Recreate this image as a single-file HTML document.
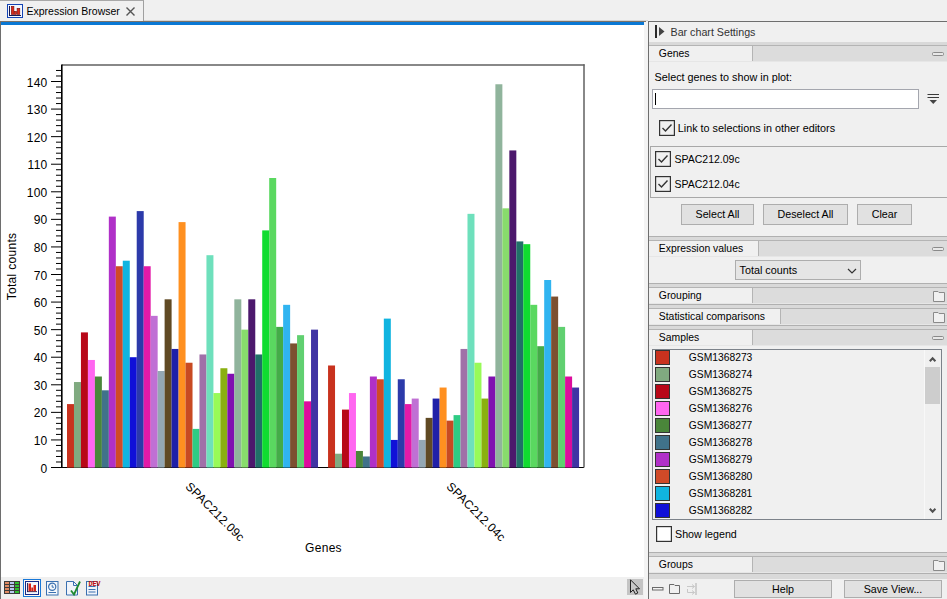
<!DOCTYPE html>
<html><head><meta charset="utf-8">
<style>
*{box-sizing:border-box;margin:0;padding:0}
html,body{width:947px;height:599px;overflow:hidden;background:#f0f0f0;font-family:"Liberation Sans",sans-serif;color:#000}
.abs{position:absolute}
svg text.ct{font-family:"Liberation Sans",sans-serif;font-size:12px;fill:#000;letter-spacing:0.3px}
.t{position:absolute;font-size:10.7px;white-space:nowrap;line-height:1;color:#000}
.hdr{position:absolute;left:649px;width:298px;height:15px;background:#dcdcdc}
.hdr .tab{position:absolute;left:0;top:0;height:15px;background:#f0f0f0;border-right:1px solid #b4b4b4}
.hdr .tab span{position:absolute;left:9px;top:2px;font-size:10.7px;white-space:nowrap;line-height:1}
.btn{position:absolute;background:#e1e1e1;border:1px solid #adadad;font-size:10.7px;text-align:center;white-space:nowrap}
</style></head><body>
<svg class="abs" style="left:0;top:0" width="947" height="599" viewBox="0 0 947 599">
<rect x="1" y="25" width="643" height="552" fill="#fff"/>
<rect x="51" y="467" width="533" height="1" fill="#000"/>
<rect x="67.00" y="404.09" width="6.99" height="63.51" fill="#c8321e"/>
<rect x="73.97" y="382.03" width="6.99" height="85.57" fill="#80aa80"/>
<rect x="80.94" y="332.40" width="6.99" height="135.20" fill="#b80818"/>
<rect x="87.92" y="359.97" width="6.99" height="107.63" fill="#ff66f0"/>
<rect x="94.89" y="376.51" width="6.99" height="91.09" fill="#4a863a"/>
<rect x="101.86" y="390.30" width="6.99" height="77.30" fill="#40728a"/>
<rect x="108.83" y="216.60" width="6.99" height="251.00" fill="#b030c8"/>
<rect x="115.81" y="266.23" width="6.99" height="201.37" fill="#d04a28"/>
<rect x="122.78" y="260.71" width="6.99" height="206.89" fill="#10b4e0"/>
<rect x="129.75" y="357.21" width="6.99" height="110.39" fill="#1010d8"/>
<rect x="136.72" y="211.09" width="6.99" height="256.51" fill="#2c3aaa"/>
<rect x="143.69" y="266.23" width="6.99" height="201.37" fill="#e41aa8"/>
<rect x="150.67" y="315.86" width="6.99" height="151.74" fill="#c070d4"/>
<rect x="157.64" y="371.00" width="6.99" height="96.60" fill="#94a8b4"/>
<rect x="164.61" y="299.31" width="6.99" height="168.29" fill="#604a24"/>
<rect x="171.58" y="348.94" width="6.99" height="118.66" fill="#2020a8"/>
<rect x="178.56" y="222.11" width="6.99" height="245.49" fill="#ff9020"/>
<rect x="185.53" y="362.73" width="6.99" height="104.87" fill="#c84a22"/>
<rect x="192.50" y="428.90" width="6.99" height="38.70" fill="#2ecc84"/>
<rect x="199.47" y="354.46" width="6.99" height="113.14" fill="#a070a8"/>
<rect x="206.44" y="255.20" width="6.99" height="212.40" fill="#6ee0bc"/>
<rect x="213.42" y="393.06" width="6.99" height="74.54" fill="#98fa58"/>
<rect x="220.39" y="368.24" width="6.99" height="99.36" fill="#8ab010"/>
<rect x="227.36" y="373.76" width="6.99" height="93.84" fill="#8010b0"/>
<rect x="234.33" y="299.31" width="6.99" height="168.29" fill="#90b49c"/>
<rect x="241.31" y="329.64" width="6.99" height="137.96" fill="#88dc6c"/>
<rect x="248.28" y="299.31" width="6.99" height="168.29" fill="#4c186c"/>
<rect x="255.25" y="354.46" width="6.99" height="113.14" fill="#207068"/>
<rect x="262.22" y="230.39" width="6.99" height="237.21" fill="#10dc30"/>
<rect x="269.19" y="178.00" width="6.99" height="289.60" fill="#5ad860"/>
<rect x="276.17" y="326.89" width="6.99" height="140.71" fill="#44ac48"/>
<rect x="283.14" y="304.83" width="6.99" height="162.77" fill="#30b4f0"/>
<rect x="290.11" y="343.43" width="6.99" height="124.17" fill="#7c5030"/>
<rect x="297.08" y="335.16" width="6.99" height="132.44" fill="#60d070"/>
<rect x="304.06" y="401.33" width="6.99" height="66.27" fill="#dc0c9c"/>
<rect x="311.03" y="329.64" width="6.99" height="137.96" fill="#4034a4"/>
<rect x="328.05" y="365.49" width="6.99" height="102.11" fill="#c8321e"/>
<rect x="335.02" y="453.71" width="6.99" height="13.89" fill="#80aa80"/>
<rect x="341.99" y="409.60" width="6.99" height="58.00" fill="#b80818"/>
<rect x="348.97" y="393.06" width="6.99" height="74.54" fill="#ff66f0"/>
<rect x="355.94" y="450.96" width="6.99" height="16.64" fill="#4a863a"/>
<rect x="362.91" y="456.47" width="6.99" height="11.13" fill="#40728a"/>
<rect x="369.88" y="376.51" width="6.99" height="91.09" fill="#b030c8"/>
<rect x="376.86" y="379.27" width="6.99" height="88.33" fill="#d04a28"/>
<rect x="383.83" y="318.61" width="6.99" height="148.99" fill="#10b4e0"/>
<rect x="390.80" y="439.93" width="6.99" height="27.67" fill="#1010d8"/>
<rect x="397.77" y="379.27" width="6.99" height="88.33" fill="#2c3aaa"/>
<rect x="404.74" y="404.09" width="6.99" height="63.51" fill="#e41aa8"/>
<rect x="411.72" y="398.57" width="6.99" height="69.03" fill="#c070d4"/>
<rect x="418.69" y="439.93" width="6.99" height="27.67" fill="#94a8b4"/>
<rect x="425.66" y="417.87" width="6.99" height="49.73" fill="#604a24"/>
<rect x="432.63" y="398.57" width="6.99" height="69.03" fill="#2020a8"/>
<rect x="439.61" y="387.54" width="6.99" height="80.06" fill="#ff9020"/>
<rect x="446.58" y="420.63" width="6.99" height="46.97" fill="#c84a22"/>
<rect x="453.55" y="415.11" width="6.99" height="52.49" fill="#2ecc84"/>
<rect x="460.52" y="348.94" width="6.99" height="118.66" fill="#a070a8"/>
<rect x="467.49" y="213.84" width="6.99" height="253.76" fill="#6ee0bc"/>
<rect x="474.47" y="362.73" width="6.99" height="104.87" fill="#98fa58"/>
<rect x="481.44" y="398.57" width="6.99" height="69.03" fill="#8ab010"/>
<rect x="488.41" y="376.51" width="6.99" height="91.09" fill="#8010b0"/>
<rect x="495.38" y="84.26" width="6.99" height="383.34" fill="#90b49c"/>
<rect x="502.36" y="208.33" width="6.99" height="259.27" fill="#88dc6c"/>
<rect x="509.33" y="150.43" width="6.99" height="317.17" fill="#4c186c"/>
<rect x="516.30" y="241.41" width="6.99" height="226.19" fill="#207068"/>
<rect x="523.27" y="244.17" width="6.99" height="223.43" fill="#10dc30"/>
<rect x="530.24" y="304.83" width="6.99" height="162.77" fill="#5ad860"/>
<rect x="537.22" y="346.19" width="6.99" height="121.41" fill="#44ac48"/>
<rect x="544.19" y="280.01" width="6.99" height="187.59" fill="#30b4f0"/>
<rect x="551.16" y="296.56" width="6.99" height="171.04" fill="#7c5030"/>
<rect x="558.13" y="326.89" width="6.99" height="140.71" fill="#60d070"/>
<rect x="565.11" y="376.51" width="6.99" height="91.09" fill="#dc0c9c"/>
<rect x="572.08" y="387.54" width="6.99" height="80.06" fill="#4034a4"/>
<rect x="62" y="64.25" width="522.5" height="1.5" fill="#626262"/>
<rect x="583.25" y="64.25" width="1.5" height="403.25" fill="#626262"/>
<rect x="61" y="64.5" width="1.6" height="403.5" fill="#000"/>
<rect x="51" y="467.00" width="11" height="1" fill="#000"/>
<rect x="56" y="461.49" width="6" height="1" fill="#000"/>
<rect x="56" y="455.97" width="6" height="1" fill="#000"/>
<rect x="56" y="450.46" width="6" height="1" fill="#000"/>
<rect x="56" y="444.94" width="6" height="1" fill="#000"/>
<rect x="51" y="439.43" width="11" height="1" fill="#000"/>
<rect x="56" y="433.91" width="6" height="1" fill="#000"/>
<rect x="56" y="428.40" width="6" height="1" fill="#000"/>
<rect x="56" y="422.89" width="6" height="1" fill="#000"/>
<rect x="56" y="417.37" width="6" height="1" fill="#000"/>
<rect x="51" y="411.86" width="11" height="1" fill="#000"/>
<rect x="56" y="406.34" width="6" height="1" fill="#000"/>
<rect x="56" y="400.83" width="6" height="1" fill="#000"/>
<rect x="56" y="395.31" width="6" height="1" fill="#000"/>
<rect x="56" y="389.80" width="6" height="1" fill="#000"/>
<rect x="51" y="384.29" width="11" height="1" fill="#000"/>
<rect x="56" y="378.77" width="6" height="1" fill="#000"/>
<rect x="56" y="373.26" width="6" height="1" fill="#000"/>
<rect x="56" y="367.74" width="6" height="1" fill="#000"/>
<rect x="56" y="362.23" width="6" height="1" fill="#000"/>
<rect x="51" y="356.71" width="11" height="1" fill="#000"/>
<rect x="56" y="351.20" width="6" height="1" fill="#000"/>
<rect x="56" y="345.69" width="6" height="1" fill="#000"/>
<rect x="56" y="340.17" width="6" height="1" fill="#000"/>
<rect x="56" y="334.66" width="6" height="1" fill="#000"/>
<rect x="51" y="329.14" width="11" height="1" fill="#000"/>
<rect x="56" y="323.63" width="6" height="1" fill="#000"/>
<rect x="56" y="318.11" width="6" height="1" fill="#000"/>
<rect x="56" y="312.60" width="6" height="1" fill="#000"/>
<rect x="56" y="307.09" width="6" height="1" fill="#000"/>
<rect x="51" y="301.57" width="11" height="1" fill="#000"/>
<rect x="56" y="296.06" width="6" height="1" fill="#000"/>
<rect x="56" y="290.54" width="6" height="1" fill="#000"/>
<rect x="56" y="285.03" width="6" height="1" fill="#000"/>
<rect x="56" y="279.51" width="6" height="1" fill="#000"/>
<rect x="51" y="274.00" width="11" height="1" fill="#000"/>
<rect x="56" y="268.49" width="6" height="1" fill="#000"/>
<rect x="56" y="262.97" width="6" height="1" fill="#000"/>
<rect x="56" y="257.46" width="6" height="1" fill="#000"/>
<rect x="56" y="251.94" width="6" height="1" fill="#000"/>
<rect x="51" y="246.43" width="11" height="1" fill="#000"/>
<rect x="56" y="240.91" width="6" height="1" fill="#000"/>
<rect x="56" y="235.40" width="6" height="1" fill="#000"/>
<rect x="56" y="229.89" width="6" height="1" fill="#000"/>
<rect x="56" y="224.37" width="6" height="1" fill="#000"/>
<rect x="51" y="218.86" width="11" height="1" fill="#000"/>
<rect x="56" y="213.34" width="6" height="1" fill="#000"/>
<rect x="56" y="207.83" width="6" height="1" fill="#000"/>
<rect x="56" y="202.31" width="6" height="1" fill="#000"/>
<rect x="56" y="196.80" width="6" height="1" fill="#000"/>
<rect x="51" y="191.29" width="11" height="1" fill="#000"/>
<rect x="56" y="185.77" width="6" height="1" fill="#000"/>
<rect x="56" y="180.26" width="6" height="1" fill="#000"/>
<rect x="56" y="174.74" width="6" height="1" fill="#000"/>
<rect x="56" y="169.23" width="6" height="1" fill="#000"/>
<rect x="51" y="163.71" width="11" height="1" fill="#000"/>
<rect x="56" y="158.20" width="6" height="1" fill="#000"/>
<rect x="56" y="152.69" width="6" height="1" fill="#000"/>
<rect x="56" y="147.17" width="6" height="1" fill="#000"/>
<rect x="56" y="141.66" width="6" height="1" fill="#000"/>
<rect x="51" y="136.14" width="11" height="1" fill="#000"/>
<rect x="56" y="130.63" width="6" height="1" fill="#000"/>
<rect x="56" y="125.11" width="6" height="1" fill="#000"/>
<rect x="56" y="119.60" width="6" height="1" fill="#000"/>
<rect x="56" y="114.09" width="6" height="1" fill="#000"/>
<rect x="51" y="108.57" width="11" height="1" fill="#000"/>
<rect x="56" y="103.06" width="6" height="1" fill="#000"/>
<rect x="56" y="97.54" width="6" height="1" fill="#000"/>
<rect x="56" y="92.03" width="6" height="1" fill="#000"/>
<rect x="56" y="86.51" width="6" height="1" fill="#000"/>
<rect x="51" y="81.00" width="11" height="1" fill="#000"/>
<rect x="56" y="75.49" width="6" height="1" fill="#000"/>
<rect x="56" y="69.97" width="6" height="1" fill="#000"/>
<text x="47.6" y="472.50" text-anchor="end" class="ct">0</text>
<text x="47.6" y="444.93" text-anchor="end" class="ct">10</text>
<text x="47.6" y="417.36" text-anchor="end" class="ct">20</text>
<text x="47.6" y="389.79" text-anchor="end" class="ct">30</text>
<text x="47.6" y="362.21" text-anchor="end" class="ct">40</text>
<text x="47.6" y="334.64" text-anchor="end" class="ct">50</text>
<text x="47.6" y="307.07" text-anchor="end" class="ct">60</text>
<text x="47.6" y="279.50" text-anchor="end" class="ct">70</text>
<text x="47.6" y="251.93" text-anchor="end" class="ct">80</text>
<text x="47.6" y="224.36" text-anchor="end" class="ct">90</text>
<text x="47.6" y="196.79" text-anchor="end" class="ct">100</text>
<text x="47.6" y="169.21" text-anchor="end" class="ct">110</text>
<text x="47.6" y="141.64" text-anchor="end" class="ct">120</text>
<text x="47.6" y="114.07" text-anchor="end" class="ct">130</text>
<text x="47.6" y="86.50" text-anchor="end" class="ct">140</text>
<text class="ct" transform="translate(15.8,266.5) rotate(-90)" text-anchor="middle">Total counts</text>
<text class="ct" x="323.5" y="552" text-anchor="middle">Genes</text>
<text class="ct" transform="translate(184.8,487.2) rotate(45)">SPAC212.09c</text>
<text class="ct" transform="translate(445.8,487.2) rotate(45)">SPAC212.04c</text>
</svg>
<div class="abs" style="left:0px;top:0px;width:144px;height:21px;background:#f0f0f0;border-top:1px solid #a8a8a8;border-right:1px solid #a0a0a0"></div>
<div class="abs" style="left:144px;top:20px;width:504px;height:1px;background:#d4d4d4;"></div>
<div class="abs" style="left:0px;top:21px;width:646px;height:1px;background:#7c7268;"></div>
<div class="abs" style="left:1px;top:22px;width:643px;height:3px;background:#0a78d4;"></div>
<svg class="abs" style="left:7px;top:4px" width="16" height="14" viewBox="0 0 16 14"><rect x="0.5" y="0.5" width="15" height="13" fill="#f4f8ff" stroke="#1444b4" stroke-width="1"/><rect x="2" y="2" width="1" height="10" fill="#1a1a50"/><rect x="2" y="11" width="12" height="1" fill="#1a1a50"/><rect x="4.3" y="2.3" width="2.6" height="8.2" fill="#e02818" stroke="#701010" stroke-width="0.6"/><rect x="7.4" y="7.3" width="2.1" height="3.2" fill="#e02818" stroke="#701010" stroke-width="0.6"/><rect x="10.1" y="4.3" width="2.7" height="6.2" fill="#e02818" stroke="#701010" stroke-width="0.6"/></svg>
<div class="t" style="left:26.5px;top:6.01px;font-size:10.5px;color:#000;">Expression Browser</div>
<svg class="abs" style="left:125px;top:6px" width="11" height="11" viewBox="0 0 11 11"><path d="M1.5 1.5L9.5 9.5M9.5 1.5L1.5 9.5" stroke="#555" stroke-width="1.4"/></svg>
<div class="abs" style="left:0px;top:22px;width:1px;height:577px;background:#6e6e6e;"></div>
<div class="abs" style="left:644px;top:22px;width:4px;height:577px;background:#f4f4f4;"></div>
<div class="abs" style="left:1px;top:577px;width:643px;height:22px;background:#f0f0f0;"></div>
<div class="abs" style="left:648px;top:21px;width:299px;height:578px;background:#f0f0f0;border-left:1px solid #6e6e6e;border-top:1px solid #6e6e6e"></div>
<div class="abs" style="left:655px;top:25px;width:2px;height:13px;background:#2a2a2a;"></div>
<svg class="abs" style="left:658px;top:26px" width="8" height="11" viewBox="0 0 8 11"><path d="M1 1L6.5 5.5L1 10Z" fill="#444"/></svg>
<div class="t" style="left:670.5px;top:27.04px;font-size:10.7px;color:#333;">Bar chart Settings</div>
<div class="abs" style="left:649px;top:42px;width:298px;height:3px;background:#d9d9d9;"></div><div class="abs" style="left:649px;top:45px;width:298px;height:1px;background:#b4b4b4;"></div><div class="abs" style="left:649px;top:46px;width:298px;height:15px;background:#dcdcdc;"></div><div class="abs" style="left:649px;top:46px;width:103px;height:15px;background:#f0f0f0;"></div><div class="abs" style="left:752px;top:46px;width:1px;height:15px;background:#b4b4b4;"></div><div class="abs" style="left:649px;top:61px;width:298px;height:1px;background:#e6e6e6;"></div><div class="t" style="left:658.8px;top:48.80px;font-size:10.4px;color:#000;">Genes</div><svg class="abs" style="left:932px;top:52px" width="12" height="5" viewBox="0 0 12 5"><rect x="0.5" y="0.5" width="11" height="3" rx="1" fill="#e8e8e8" stroke="#8a8a8a"/></svg>
<div class="t" style="left:654.6px;top:71.56px;font-size:10.8px;color:#000;">Select genes to show in plot:</div>
<div class="abs" style="left:652px;top:89px;width:267px;height:20px;background:#fff;border:1px solid #a4a6ae"></div>
<div class="abs" style="left:655px;top:93px;width:1px;height:12px;background:#000;"></div>
<svg class="abs" style="left:926px;top:93px" width="14" height="12" viewBox="0 0 14 12"><rect x="1.5" y="1" width="11.5" height="1" fill="#3a3a3a"/><rect x="1.5" y="4" width="11.5" height="1" fill="#3a3a3a"/><path d="M3.5 7H11L7.25 11Z" fill="#444"/></svg>
<svg class="abs" style="left:659px;top:120px" width="16" height="16" viewBox="0 0 16 16"><rect x="0.6" y="0.6" width="14.8" height="14.8" fill="#f0f0f0" stroke="#333" stroke-width="1.2"/><path d="M3.5 8L6.5 11L12.5 4.5" fill="none" stroke="#333" stroke-width="1.4"/></svg>
<div class="t" style="left:677.8px;top:122.76px;font-size:10.8px;color:#000;">Link to selections in other editors</div>
<div class="abs" style="left:650px;top:146px;width:297px;height:52px;background:#f0f0f0;border:1px solid #a8a8a8;border-right:none"></div>
<svg class="abs" style="left:655px;top:151px" width="16" height="16" viewBox="0 0 16 16"><rect x="0.6" y="0.6" width="14.8" height="14.8" fill="#f0f0f0" stroke="#333" stroke-width="1.2"/><path d="M3.5 8L6.5 11L12.5 4.5" fill="none" stroke="#333" stroke-width="1.4"/></svg>
<div class="t" style="left:674.5px;top:154.01px;font-size:10.5px;color:#000;">SPAC212.09c</div>
<svg class="abs" style="left:655px;top:176px" width="16" height="16" viewBox="0 0 16 16"><rect x="0.6" y="0.6" width="14.8" height="14.8" fill="#f0f0f0" stroke="#333" stroke-width="1.2"/><path d="M3.5 8L6.5 11L12.5 4.5" fill="none" stroke="#333" stroke-width="1.4"/></svg>
<div class="t" style="left:674.5px;top:179.01px;font-size:10.5px;color:#000;">SPAC212.04c</div>
<div class="abs" style="left:681px;top:204px;width:73px;height:21px;background:#e1e1e1;border:1px solid #adadad"></div><div class="t" style="left:681px;width:73px;text-align:center;top:209.14px;font-size:10.7px">Select All</div>
<div class="abs" style="left:763px;top:204px;width:85px;height:21px;background:#e1e1e1;border:1px solid #adadad"></div><div class="t" style="left:763px;width:85px;text-align:center;top:209.14px;font-size:10.7px">Deselect All</div>
<div class="abs" style="left:857px;top:204px;width:55px;height:21px;background:#e1e1e1;border:1px solid #adadad"></div><div class="t" style="left:857px;width:55px;text-align:center;top:209.14px;font-size:10.7px">Clear</div>
<div class="abs" style="left:649px;top:236px;width:298px;height:1px;background:#b0b0b0;"></div><div class="abs" style="left:649px;top:237px;width:298px;height:3px;background:#d9d9d9;"></div><div class="abs" style="left:649px;top:240px;width:298px;height:1px;background:#b4b4b4;"></div><div class="abs" style="left:649px;top:241px;width:298px;height:15px;background:#dcdcdc;"></div><div class="abs" style="left:649px;top:241px;width:109px;height:15px;background:#f0f0f0;"></div><div class="abs" style="left:758px;top:241px;width:1px;height:15px;background:#b4b4b4;"></div><div class="abs" style="left:649px;top:256px;width:298px;height:1px;background:#e6e6e6;"></div><div class="t" style="left:658.8px;top:243.80px;font-size:10.4px;color:#000;">Expression values</div><svg class="abs" style="left:932px;top:247px" width="12" height="5" viewBox="0 0 12 5"><rect x="0.5" y="0.5" width="11" height="3" rx="1" fill="#e8e8e8" stroke="#8a8a8a"/></svg>
<div class="abs" style="left:735px;top:260px;width:126px;height:20px;background:#e5e5e5;border:1px solid #adadad"></div>
<div class="t" style="left:739.5px;top:264.86px;font-size:10.8px;color:#000;">Total counts</div>
<svg class="abs" style="left:847px;top:268px" width="10" height="7" viewBox="0 0 10 7"><path d="M1 1L5 5L9 1" fill="none" stroke="#333" stroke-width="1.2"/></svg>
<div class="abs" style="left:649px;top:283px;width:298px;height:1px;background:#b0b0b0;"></div><div class="abs" style="left:649px;top:284px;width:298px;height:3px;background:#d9d9d9;"></div><div class="abs" style="left:649px;top:287px;width:298px;height:1px;background:#b4b4b4;"></div><div class="abs" style="left:649px;top:288px;width:298px;height:15px;background:#dcdcdc;"></div><div class="abs" style="left:649px;top:288px;width:103px;height:15px;background:#f0f0f0;"></div><div class="abs" style="left:752px;top:288px;width:1px;height:15px;background:#b4b4b4;"></div><div class="abs" style="left:649px;top:303px;width:298px;height:1px;background:#e6e6e6;"></div><div class="t" style="left:658.8px;top:290.80px;font-size:10.4px;color:#000;">Grouping</div><svg class="abs" style="left:933px;top:291px" width="13" height="12" viewBox="0 0 13 12"><path d="M0.5 0.5H5L6 1.5H11.5V10.5H0.5Z" fill="#f0f0f0" stroke="#8a8a8a"/></svg>
<div class="abs" style="left:649px;top:304px;width:298px;height:1px;background:#b0b0b0;"></div><div class="abs" style="left:649px;top:305px;width:298px;height:3px;background:#d9d9d9;"></div><div class="abs" style="left:649px;top:308px;width:298px;height:1px;background:#b4b4b4;"></div><div class="abs" style="left:649px;top:309px;width:298px;height:15px;background:#dcdcdc;"></div><div class="abs" style="left:649px;top:309px;width:131px;height:15px;background:#f0f0f0;"></div><div class="abs" style="left:780px;top:309px;width:1px;height:15px;background:#b4b4b4;"></div><div class="abs" style="left:649px;top:324px;width:298px;height:1px;background:#e6e6e6;"></div><div class="t" style="left:658.8px;top:311.80px;font-size:10.4px;color:#000;">Statistical comparisons</div><svg class="abs" style="left:933px;top:312px" width="13" height="12" viewBox="0 0 13 12"><path d="M0.5 0.5H5L6 1.5H11.5V10.5H0.5Z" fill="#f0f0f0" stroke="#8a8a8a"/></svg>
<div class="abs" style="left:649px;top:325px;width:298px;height:1px;background:#b0b0b0;"></div><div class="abs" style="left:649px;top:326px;width:298px;height:3px;background:#d9d9d9;"></div><div class="abs" style="left:649px;top:329px;width:298px;height:1px;background:#b4b4b4;"></div><div class="abs" style="left:649px;top:330px;width:298px;height:15px;background:#dcdcdc;"></div><div class="abs" style="left:649px;top:330px;width:103px;height:15px;background:#f0f0f0;"></div><div class="abs" style="left:752px;top:330px;width:1px;height:15px;background:#b4b4b4;"></div><div class="abs" style="left:649px;top:345px;width:298px;height:1px;background:#e6e6e6;"></div><div class="t" style="left:658.8px;top:332.80px;font-size:10.4px;color:#000;">Samples</div><svg class="abs" style="left:932px;top:336px" width="12" height="5" viewBox="0 0 12 5"><rect x="0.5" y="0.5" width="11" height="3" rx="1" fill="#e8e8e8" stroke="#8a8a8a"/></svg>
<div class="abs" style="left:652px;top:349px;width:290px;height:171px;background:#f0f0f0;border:1px solid #7c828a"></div>
<div class="abs" style="left:655px;top:350px;width:15px;height:15px;background:#c8321e;border:1px solid #333"></div>
<div class="t" style="left:688.8px;top:352.88px;font-size:10.3px;color:#000;">GSM1368273</div>
<div class="abs" style="left:655px;top:367px;width:15px;height:15px;background:#80aa80;border:1px solid #333"></div>
<div class="t" style="left:688.8px;top:369.88px;font-size:10.3px;color:#000;">GSM1368274</div>
<div class="abs" style="left:655px;top:384px;width:15px;height:15px;background:#b80818;border:1px solid #333"></div>
<div class="t" style="left:688.8px;top:386.88px;font-size:10.3px;color:#000;">GSM1368275</div>
<div class="abs" style="left:655px;top:401px;width:15px;height:15px;background:#ff66f0;border:1px solid #333"></div>
<div class="t" style="left:688.8px;top:403.88px;font-size:10.3px;color:#000;">GSM1368276</div>
<div class="abs" style="left:655px;top:418px;width:15px;height:15px;background:#4a863a;border:1px solid #333"></div>
<div class="t" style="left:688.8px;top:420.88px;font-size:10.3px;color:#000;">GSM1368277</div>
<div class="abs" style="left:655px;top:435px;width:15px;height:15px;background:#40728a;border:1px solid #333"></div>
<div class="t" style="left:688.8px;top:437.88px;font-size:10.3px;color:#000;">GSM1368278</div>
<div class="abs" style="left:655px;top:452px;width:15px;height:15px;background:#b030c8;border:1px solid #333"></div>
<div class="t" style="left:688.8px;top:454.88px;font-size:10.3px;color:#000;">GSM1368279</div>
<div class="abs" style="left:655px;top:469px;width:15px;height:15px;background:#d04a28;border:1px solid #333"></div>
<div class="t" style="left:688.8px;top:471.88px;font-size:10.3px;color:#000;">GSM1368280</div>
<div class="abs" style="left:655px;top:486px;width:15px;height:15px;background:#10b4e0;border:1px solid #333"></div>
<div class="t" style="left:688.8px;top:488.88px;font-size:10.3px;color:#000;">GSM1368281</div>
<div class="abs" style="left:655px;top:503px;width:15px;height:15px;background:#1010d8;border:1px solid #333"></div>
<div class="t" style="left:688.8px;top:505.88px;font-size:10.3px;color:#000;">GSM1368282</div>
<div class="abs" style="left:924px;top:350px;width:17px;height:169px;background:#f0f0f0;border-left:1px solid #f8f8f8"></div>
<div class="abs" style="left:925px;top:367px;width:15px;height:37px;background:#cdcdcd;"></div>
<svg class="abs" style="left:928px;top:355px" width="10" height="8" viewBox="0 0 10 8"><path d="M1.8 6.2L4.6 3.2L7.4 6.2" fill="none" stroke="#505050" stroke-width="2"/></svg>
<svg class="abs" style="left:928px;top:507px" width="10" height="8" viewBox="0 0 10 8"><path d="M1.8 1.8L4.6 4.8L7.4 1.8" fill="none" stroke="#505050" stroke-width="2"/></svg>
<svg class="abs" style="left:656px;top:526px" width="16" height="16" viewBox="0 0 16 16"><rect x="0.6" y="0.6" width="14.8" height="14.8" fill="#fff" stroke="#333" stroke-width="1.2"/></svg>
<div class="t" style="left:675px;top:529.04px;font-size:10.7px;color:#000;">Show legend</div>
<div class="abs" style="left:649px;top:552px;width:298px;height:1px;background:#b0b0b0;"></div><div class="abs" style="left:649px;top:553px;width:298px;height:3px;background:#d9d9d9;"></div><div class="abs" style="left:649px;top:556px;width:298px;height:1px;background:#b4b4b4;"></div><div class="abs" style="left:649px;top:557px;width:298px;height:15px;background:#dcdcdc;"></div><div class="abs" style="left:649px;top:557px;width:103px;height:15px;background:#f0f0f0;"></div><div class="abs" style="left:752px;top:557px;width:1px;height:15px;background:#b4b4b4;"></div><div class="abs" style="left:649px;top:572px;width:298px;height:1px;background:#e6e6e6;"></div><div class="t" style="left:658.8px;top:559.80px;font-size:10.4px;color:#000;">Groups</div><svg class="abs" style="left:933px;top:560px" width="13" height="12" viewBox="0 0 13 12"><path d="M0.5 0.5H5L6 1.5H11.5V10.5H0.5Z" fill="#f0f0f0" stroke="#8a8a8a"/></svg>
<div class="abs" style="left:649px;top:573px;width:298px;height:1px;background:#b0b0b0;"></div>
<div class="abs" style="left:649px;top:574px;width:298px;height:5px;background:#d9d9d9;"></div>
<svg class="abs" style="left:651px;top:586px" width="13" height="6" viewBox="0 0 13 6"><rect x="1.5" y="1.5" width="10.5" height="2.5" fill="#f4f4f4" stroke="#6a6a6a"/></svg>
<svg class="abs" style="left:668px;top:583px" width="13" height="12" viewBox="0 0 13 12"><path d="M1.5 1.5H6L7 2.5H11.5V10.5H1.5Z" fill="#f0f0f0" stroke="#6a6a6a"/></svg>
<svg class="abs" style="left:686px;top:582px" width="12" height="14" viewBox="0 0 12 14"><rect x="9.2" y="1" width="1.6" height="12" fill="#c8c8c8"/><path d="M1 4.5H8.5M6 2.5L8.5 4.5L6 6.5M1.5 7V10.5H8.5M6 8.5L8.5 10.5L6 12.5" fill="none" stroke="#c8c8c8" stroke-width="1"/></svg>
<div class="abs" style="left:734px;top:580px;width:98px;height:18px;background:#e1e1e1;border:1px solid #adadad"></div><div class="t" style="left:734px;width:98px;text-align:center;top:583.94px;font-size:10.7px">Help</div>
<div class="abs" style="left:844px;top:580px;width:98px;height:18px;background:#e1e1e1;border:1px solid #adadad"></div><div class="t" style="left:844px;width:98px;text-align:center;top:583.94px;font-size:10.7px">Save View...</div>
<svg class="abs" style="left:4px;top:581px" width="16" height="13" viewBox="0 0 16 13"><rect x="0" y="0" width="16" height="13" fill="#3c3c3c"/><rect x="1" y="1" width="4" height="2" fill="#e08a62"/><rect x="6" y="1" width="4" height="2" fill="#b8c8f0"/><rect x="11" y="1" width="4" height="2" fill="#30c030"/><rect x="1" y="4" width="4" height="2" fill="#e08a62"/><rect x="6" y="4" width="4" height="2" fill="#b8c8f0"/><rect x="11" y="4" width="4" height="2" fill="#30c030"/><rect x="1" y="7" width="4" height="2" fill="#e08a62"/><rect x="6" y="7" width="4" height="2" fill="#b8c8f0"/><rect x="11" y="7" width="4" height="2" fill="#30c030"/><rect x="1" y="10" width="4" height="2" fill="#e08a62"/><rect x="6" y="10" width="4" height="2" fill="#b8c8f0"/><rect x="11" y="10" width="4" height="2" fill="#30c030"/></svg>
<svg class="abs" style="left:23px;top:579px" width="18" height="18" viewBox="0 0 18 18"><rect x="0.5" y="0.5" width="17" height="17" fill="#fdf8f0" stroke="#1878d8"/><rect x="2.5" y="2.5" width="13" height="13" fill="#f4f8ff" stroke="#142a8a"/><rect x="4" y="4" width="0.9" height="9" fill="#1a1a50"/><rect x="4" y="12.2" width="10" height="0.9" fill="#1a1a50"/><rect x="5.5" y="4.5" width="2.5" height="7.8" fill="#d42418"/><rect x="8.3" y="8.5" width="1.8" height="3.8" fill="#d42418"/><rect x="10.5" y="6" width="2.5" height="6.3" fill="#d42418"/></svg>
<svg class="abs" style="left:45px;top:580px" width="15" height="16" viewBox="0 0 15 16"><rect x="1.5" y="1.5" width="11.5" height="13.5" fill="#f4f8fc" stroke="#3a70b0"/><circle cx="7.2" cy="6.8" r="3.6" fill="none" stroke="#3a70b0" stroke-width="1.2"/><path d="M7.2 4.8V7.2H9" fill="none" stroke="#3a70b0" stroke-width="1"/><rect x="3.5" y="12" width="7.5" height="1" fill="#3a70b0"/></svg>
<svg class="abs" style="left:65px;top:580px" width="17" height="16" viewBox="0 0 17 16"><path d="M1.5 1.5H8.5L12.5 5.5V15H1.5Z" fill="#f0f4fa" stroke="#3a70b0"/><path d="M8.5 1.5V5.5H12.5" fill="none" stroke="#3a70b0"/><path d="M6 10.5L9 14.5L15 1.5" fill="none" stroke="#1e8a30" stroke-width="1.8"/></svg>
<svg class="abs" style="left:85px;top:578px" width="17" height="18" viewBox="0 0 17 18"><rect x="1.5" y="3.5" width="11" height="13.5" fill="#f0f4fa" stroke="#3a70b0"/><rect x="3.5" y="8" width="7" height="1" fill="#3a70b0"/><rect x="3.5" y="11" width="7" height="1" fill="#3a70b0"/><rect x="3.5" y="13.5" width="7" height="1" fill="#3a70b0"/><text x="3.5" y="7.5" font-family="Liberation Mono" font-weight="bold" font-size="7" fill="#c01010" textLength="12">DEV</text></svg>
<svg class="abs" style="left:627px;top:579px" width="16" height="16" viewBox="0 0 16 16"><rect width="16" height="16" fill="#c4c4c4"/><path d="M3.5 0.8V13.5L6.2 10.8L8.5 15.2L10.8 14L8.8 9.8H12.5Z" fill="#c8c8c8" stroke="#222" stroke-width="1"/></svg>
</body></html>
